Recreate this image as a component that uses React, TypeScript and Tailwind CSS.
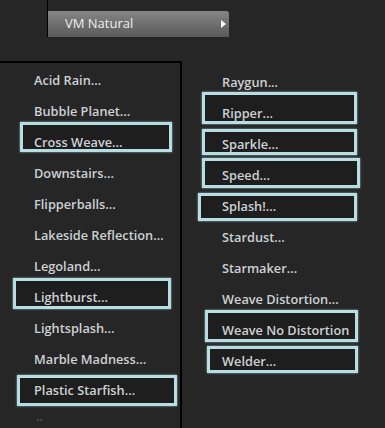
const left = [
  { label: "Acid Rain..." },
  { label: "Bubble Planet..." },
  { label: "Cross Weave...", box: "top-[-5px] h-[30px] left-[20px] w-[152px]" },
  { label: "Downstairs..." },
  { label: "Flipperballs..." },
  { label: "Lakeside Reflection..." },
  { label: "Legoland..." },
  { label: "Lightburst...", box: "top-[-4px] h-[31px] left-[13px] w-[158px]" },
  { label: "Lightsplash..." },
  { label: "Marble Madness..." },
  { label: "Plastic Starfish...", box: "top-[0px] h-[31px] left-[17px] w-[160px]" },
];

const right = [
  { label: "Raygun..." },
  { label: "Ripper...", box: "top-[-6px] h-[32px] left-[20px] w-[155px]" },
  { label: "Sparkle...", box: "top-[0px] h-[26px] left-[20px] w-[155px]" },
  { label: "Speed...", box: "top-[-2px] h-[30px] left-[20px] w-[158px]" },
  { label: "Splash!...", box: "top-[2px] h-[28px] left-[16px] w-[159px]" },
  { label: "Stardust..." },
  { label: "Starmaker..." },
  { label: "Weave Distortion..." },
  { label: "Weave No Distortion", box: "top-[-5px] h-[32px] left-[23px] w-[153px]" },
  { label: "Welder...", box: "top-[0px] h-[27px] left-[25px] w-[151px]" },
];

type Item = { label: string; box?: string };

function Row({ item, pad }: { item: Item; pad: string }) {
  return (
    <div className={`relative h-[31px] flex items-center ${pad}`}>
      {item.box && (
        <div
          className={`absolute ${item.box} border-[3px] border-[#b8dde3] bg-[#1e1e1e] shadow-[0_0_2px_#8fb8be]`}
        />
      )}
      <span className="relative whitespace-nowrap">{item.label}</span>
    </div>
  );
}

export default function App() {
  return (
    <div className="w-[385px] h-[428px] bg-[#262626] overflow-hidden text-[12.75px] font-semibold text-[#cdd1d4] font-['Open_Sans',sans-serif]">
      <div className="ml-[47px] w-[182px] h-[37px] border-l border-black flex flex-col justify-end">
        <div className="h-[26px] rounded-tr-[3px] bg-gradient-to-b from-[#858585] to-[#5a5a5a] flex items-center justify-between pl-[17px] pr-[3px] text-[13px] font-normal text-[#eeeeee]">
          <span>VM Natural</span>
          <span className="w-0 h-0 border-y-[4px] border-y-transparent border-l-[5px] border-l-white" />
        </div>
      </div>
      <div className="mt-[24px] flex">
        <div className="w-[182px] h-[367px] border-t-2 border-r-2 border-black pt-[2px]">
          {left.map((it) => (
            <Row key={it.label} item={it} pad="pl-[34px]" />
          ))}
          <div className="h-[20px] pl-[36px] text-[#555555] leading-[20px]">..</div>
        </div>
        <div className="flex-1 pt-[6px]">
          {right.map((it) => (
            <Row key={it.label} item={it} pad="pl-[40px]" />
          ))}
        </div>
      </div>
    </div>
  );
}
